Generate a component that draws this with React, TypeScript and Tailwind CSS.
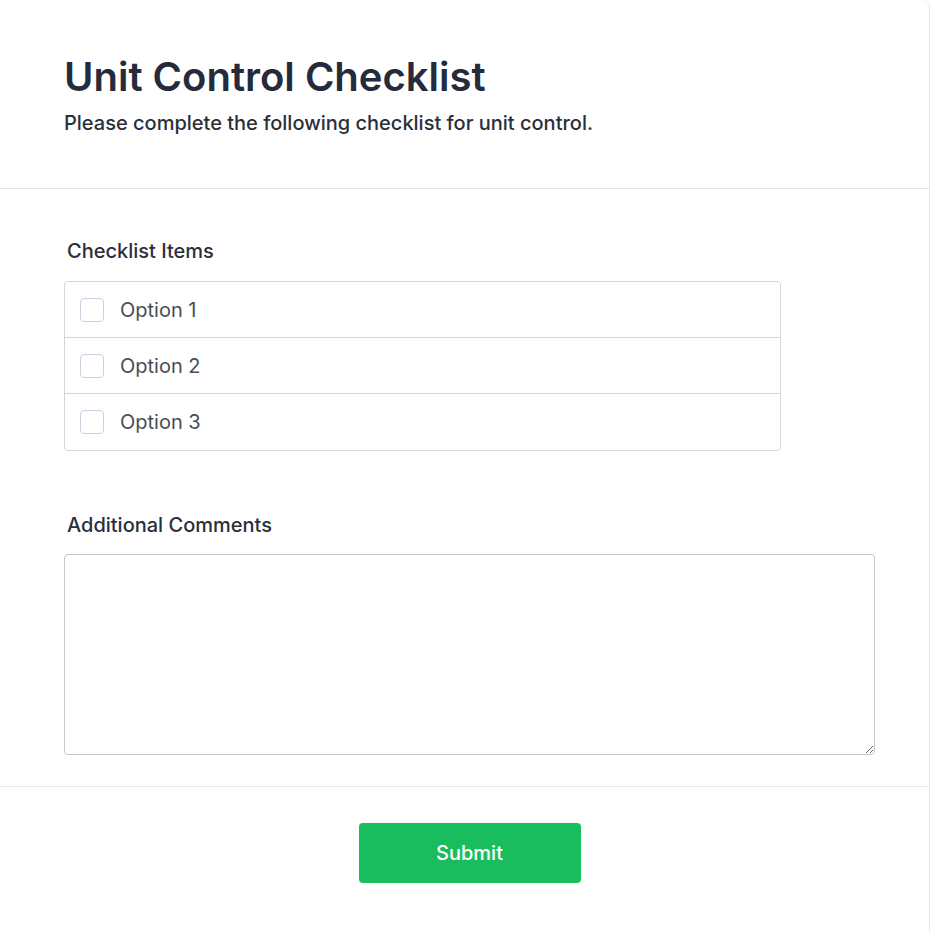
import { useState } from "react";

const OPTIONS = ["Option 1", "Option 2", "Option 3"];

export default function App() {
    const [checked, setChecked] = useState<Record<string, boolean>>({});
    const [comments, setComments] = useState("");

    return (
        <div className="min-h-[932px] bg-white border-r border-[#e5e7eb] rounded-tr-lg font-['Inter','Liberation_Sans',sans-serif]">

            {/* ── Header ── */}
            <div className="pl-16 pr-[54px] pt-[57px] pb-[51px] border-b border-[#e1e3e8]">
                <h1 className="text-[40px] font-semibold leading-10 text-[#252b3b]">Unit Control Checklist</h1>
                <p className="mt-3 text-xl leading-7 font-medium text-[#2a2f3a]">
                    Please complete the following checklist for unit control.
                </p>
            </div>

            {/* ── Body ── */}
            <div className="pl-16 pr-[54px] pt-12 pb-[31px] border-b border-[#e7e8ee]">
                <p className="ml-[3px] mb-4 text-xl leading-7 font-medium text-[#2a2f3a]">Checklist Items</p>
                <div className="w-[717px] rounded border border-[#d4d5da] divide-y divide-[#d4d5da]">
                    {OPTIONS.map(opt => (
                        <label key={opt} className="h-[56px] flex items-center gap-4 pl-[15px] cursor-pointer">
                            <input
                                type="checkbox"
                                checked={!!checked[opt]}
                                onChange={e => setChecked({ ...checked, [opt]: e.target.checked })}
                                className="appearance-none h-6 w-6 rounded border border-[#c9cfdc] bg-white checked:bg-[#1cbe5e]"
                            />
                            <span className="text-xl leading-7 text-[#4a4d55]">{opt}</span>
                        </label>
                    ))}
                </div>

                <p className="ml-[3px] mt-[60px] mb-[15px] text-xl leading-7 font-medium text-[#2a2f3a]">Additional Comments</p>
                <textarea
                    value={comments}
                    onChange={e => setComments(e.target.value)}
                    className="block w-[811px] h-[201px] rounded border border-[#c3c6d1] p-3 text-base outline-none"
                />
            </div>

            {/* ── Footer ── */}
            <div className="pl-16 pr-[54px] pt-[36px] pb-[50px] flex justify-center">
                <button className="w-[222px] h-[60px] rounded bg-[#1abd5d] text-xl font-medium text-white">
                    Submit
                </button>
            </div>
        </div>
    );
}
